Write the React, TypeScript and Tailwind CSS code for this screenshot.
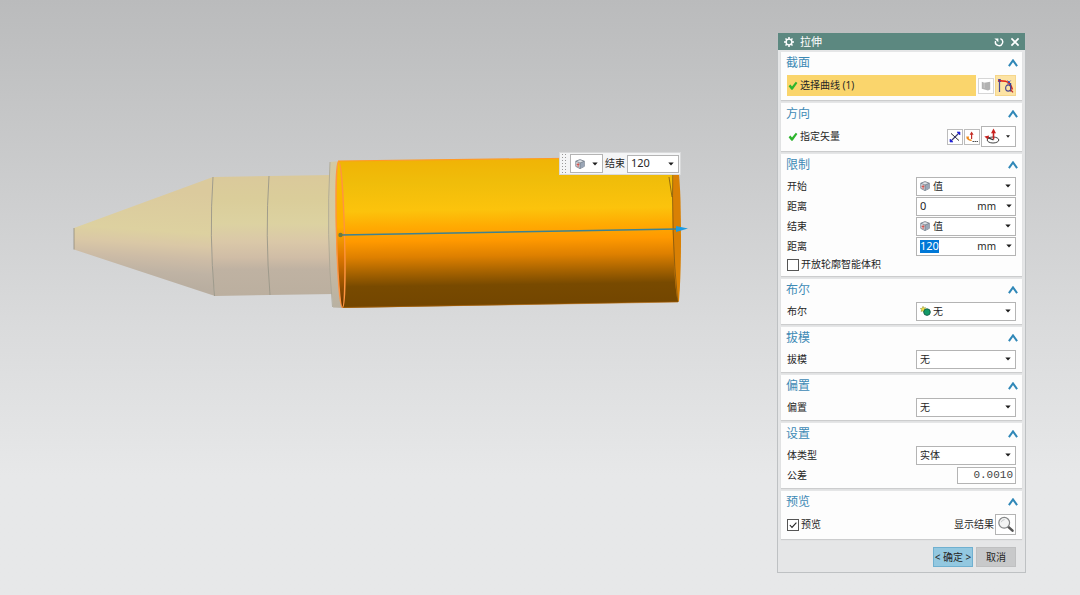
import { useState } from "react";
import type { ReactNode } from "react";

// ─── Small glyphs ────────────────────────────────────────────────────────────

function Caret({ className = "" }: { className?: string }) {
  return (
    <svg viewBox="0 0 6 4" className={`h-1 w-1.5 shrink-0 ${className}`}>
      <path d="M0.3 0.4h5.4L3 3.6z" fill="#1c1c1c" />
    </svg>
  );
}

function GreenCheck() {
  return (
    <svg viewBox="0 0 10 10" className="h-2.5 w-2.5 shrink-0">
      <path d="M0.6 5.2L2.4 3.6L4 5.4L7.8 0.8L9.4 2L4.6 8.8L3.4 8.8Z" fill="#2db52d" />
    </svg>
  );
}

function CubeIcon() {
  return (
    <svg viewBox="0 0 10 10" className="h-2.5 w-2.5 shrink-0">
      <path d="M5 0.6L9.3 2.2V7.4L5 9.6L0.8 7.4V2.2Z" fill="#dfe3e8" stroke="#7b838e" strokeWidth="0.9" />
      <path d="M5 4L9.3 2.2V7.4L5 9.6Z" fill="#9aa6b6" />
      <path d="M0.8 2.2L5 4V9.6M5 4L9.3 2.2" fill="none" stroke="#747d89" strokeWidth="0.8" />
      <path d="M1.6 5.6h2.8M3.1 4v4" stroke="#d0504a" strokeWidth="1" />
    </svg>
  );
}

function BooleanIcon() {
  return (
    <svg viewBox="0 0 11 10" className="h-2.5 w-[11px] shrink-0">
      <path d="M3 0.3L3.8 2L5.6 1.6L4.9 3.2L6.2 4.4L4.4 4.6L4 6.2L2.8 4.9L1 5.4L1.7 3.8L0.3 2.6L2.2 2.3Z" fill="#f0e04a" stroke="#8a8f2b" strokeWidth="0.5" />
      <circle cx="7" cy="6.1" r="3.3" fill="#139a68" stroke="#145c48" strokeWidth="0.9" />
    </svg>
  );
}

// ─── Form pieces ─────────────────────────────────────────────────────────────

function Section({ title, children }: { title: string; children: ReactNode }) {
  const [open, setOpen] = useState(true);
  return (
    <section className="bg-[#fdfdfd] pb-[3px] shadow-[0_1px_1px_#cccdce]">
      <button
        type="button"
        onClick={() => setOpen(!open)}
        aria-expanded={open}
        className="flex h-[22px] w-full items-center justify-between pl-[5px] pr-1 text-xs text-[#3d8ab5]"
      >
        {title}
        <svg viewBox="0 0 10 8" className={`h-2 w-2.5 ${open ? "" : "rotate-180"}`}>
          <path d="M0.9 7.2L5 1.4L9.1 7.2" fill="none" stroke="#3088b8" strokeWidth="2" />
        </svg>
      </button>
      {open && <div className="px-1.5">{children}</div>}
    </section>
  );
}

type SelectRowProps = { id: string; label: string; options: string[]; icon?: ReactNode };

function SelectRow({ id, label, options, icon }: SelectRowProps) {
  return (
    <div className="flex h-5 items-center justify-between">
      <label htmlFor={id}>{label}</label>
      <div className="relative flex w-[100px] items-center">
        <select
          id={id}
          className={`h-[19px] w-full appearance-none border border-[#b4b4b4] bg-white ${icon ? "pl-4" : "pl-[3px]"}`}
        >
          {options.map((o) => (
            <option key={o}>{o}</option>
          ))}
        </select>
        {icon && <span className="pointer-events-none absolute left-1">{icon}</span>}
        <Caret className="pointer-events-none absolute right-[5px]" />
      </div>
    </div>
  );
}

type DistanceRowProps = { id: string; label: string; value: string; active?: boolean };

function DistanceRow({ id, label, value, active }: DistanceRowProps) {
  return (
    <div className="flex h-5 items-center justify-between">
      <label htmlFor={id}>{label}</label>
      <div className="flex h-[19px] w-[100px] items-center justify-between border border-[#b4b4b4] bg-white pl-[3px] pr-[3px]">
        <input
          id={id}
          defaultValue={value}
          className={`h-[13px] w-[19px] text-[11px] outline-none ${active ? "bg-[#0078d7] text-white" : ""}`}
        />
        <span className="ml-auto mr-2.5 text-[10px]">mm</span>
        <button type="button" aria-label="单位" className="flex">
          <Caret />
        </button>
      </div>
    </div>
  );
}

// ─── Extrude dialog ──────────────────────────────────────────────────────────

function ExtrudeDialog() {
  return (
    <form
      onSubmit={(e) => e.preventDefault()}
      className="absolute right-[54px] top-[33px] w-[249px] border border-t-0 border-[#bec1c3] bg-[#e5e6e7] text-[10px] text-[#262626]"
    >
      <header className="flex h-[17px] items-center bg-[#5c8880] pl-1.5 pr-[5px] text-white">
        <svg viewBox="0 0 10 10" className="h-2.5 w-2.5">
          <path
            d="M5 0V10M0 5H10M1.5 1.5L8.5 8.5M8.5 1.5L1.5 8.5"
            stroke="currentColor"
            strokeWidth="1.5"
          />
          <circle cx="5" cy="5" r="2.9" fill="#5c8880" stroke="currentColor" strokeWidth="1.4" />
        </svg>
        <h1 className="ml-1.5 text-[11px] leading-none">拉伸</h1>
        <button type="button" aria-label="重置" className="ml-auto">
          <svg viewBox="0 0 10 10" className="h-2.5 w-2.5">
            <path d="M6.4 1.7A3.6 3.6 0 1 1 1.6 4" fill="none" stroke="currentColor" strokeWidth="1.4" />
            <path d="M0.4 1.6H4.4V5.2Z" fill="currentColor" />
          </svg>
        </button>
        <button type="button" aria-label="关闭" className="ml-1.5">
          <svg viewBox="0 0 10 10" className="h-2.5 w-2.5">
            <path d="M1.4 1.4L8.6 8.6M8.6 1.4L1.4 8.6" stroke="currentColor" strokeWidth="1.7" />
          </svg>
        </button>
      </header>

      <div className="flex flex-col gap-[3px] px-[3px] pt-0.5">
        <Section title="截面">
          <div className="flex h-[23px] items-center">
            <div className="flex h-[21px] flex-1 items-center gap-0.5 bg-[#fad56c] pl-px">
              <GreenCheck />
              <span>选择曲线 (1)</span>
            </div>
            <button type="button" aria-label="绘制截面" className="ml-0.5 flex h-4 w-4 items-center justify-center border border-[#d6d6d6] bg-white">
              <svg viewBox="0 0 10 10" className="h-2.5 w-2.5">
                <path d="M0.8 0.8L3.2 1.8L9.2 0.8V8.4L7 9.4L0.8 7.8Z" fill="#b2b2b2" />
                <path d="M3.2 1.8V7" stroke="#cacaca" />
              </svg>
            </button>
            <button type="button" aria-label="曲线" className="ml-px flex h-[21px] w-[21px] items-center justify-center border border-[#f5d68c] bg-[#fce3a4]">
              <svg viewBox="0 0 18 18" className="h-[18px] w-[18px]">
                <path d="M2.5 2V15" stroke="#4a4c98" strokeWidth="1.2" />
                <path d="M1 3.6L8.5 4.2Q13.4 5.2 15.4 12.5" fill="none" stroke="#e02a18" strokeWidth="1.6" />
                <path d="M13.6 6V14.5" stroke="#3a3d8c" strokeWidth="1.2" />
                <ellipse cx="11.2" cy="11" rx="2.6" ry="3.1" fill="none" stroke="#4a4891" strokeWidth="1.1" />
                <path d="M1.2 2.2L3.8 4.8M3.8 2.2L1.2 4.8M10.6 3.6L13.6 6.6M13.6 3.6L10.6 6.6" stroke="#2b41c0" strokeWidth="0.9" />
                <path d="M13.8 12.8L16 15.4" stroke="#c32c2a" strokeWidth="1.3" />
              </svg>
            </button>
          </div>
        </Section>

        <Section title="方向">
          <div className="flex h-[23px] items-center">
            <div className="flex flex-1 items-center gap-0.5 pl-px">
              <GreenCheck />
              <span>指定矢量</span>
            </div>
            <button type="button" aria-label="反向" className="flex h-4 w-4 items-center justify-center border border-[#bcbcbc] bg-white">
              <svg viewBox="0 0 12 12" className="h-3 w-3">
                <path d="M2 2.4L10 9.6" stroke="#333" strokeWidth="1" />
                <path d="M2 10L10 2" stroke="#3a3a70" strokeWidth="1.1" />
                <path d="M11 1V4L8 1ZM1 11V8L4 11Z" fill="#2222d8" stroke="#2222d8" strokeWidth="0.6" />
              </svg>
            </button>
            <button type="button" aria-label="矢量对话框" className="ml-px flex h-4 w-4 items-center justify-center border border-[#bcbcbc] bg-white">
              <svg viewBox="0 0 12 12" className="h-3 w-3">
                <path d="M5.6 8V2" stroke="#c42d25" strokeWidth="1.2" />
                <path d="M5.6 0.5L7.6 3.8H3.6Z" fill="#c42d25" />
                <path d="M1 5.5Q1.5 9.5 5.6 9.2" fill="none" stroke="#ef8a1c" strokeWidth="1.5" />
                <path d="M0.3 7.3L2.5 5L3.2 8Z" fill="#ef8a1c" />
                <path d="M6.6 10.5h1.2M8.6 10.5h1.2M10.6 10.5h1.2" stroke="#222" strokeWidth="1.2" />
              </svg>
            </button>
            <button type="button" aria-label="矢量类型" className="ml-px flex h-[21px] w-[35px] items-center justify-between border border-[#b4b4b4] bg-white pl-0.5 pr-[5px]">
              <svg viewBox="0 0 17 17" className="h-[17px] w-[17px]">
                <ellipse cx="9" cy="12" rx="5.8" ry="3" fill="none" stroke="#444" strokeWidth="1" />
                <path d="M9.5 11.5V4" stroke="#c9211e" strokeWidth="1.6" />
                <path d="M9.5 0.5L12 5.2H7Z" fill="#c9211e" />
                <path d="M9.5 12L4 9.6" stroke="#333" strokeWidth="1.2" />
                <path d="M0.4 8.6L5.2 7.6L3.8 11.6Z" fill="#c9211e" />
              </svg>
              <svg viewBox="0 0 4 3" className="h-[3px] w-1">
                <path d="M0 0.2h4L2 2.8z" fill="#222" />
              </svg>
            </button>
          </div>
        </Section>

        <Section title="限制">
          <SelectRow id="start" label="开始" options={["值", "对称值", "贯通"]} icon={<CubeIcon />} />
          <DistanceRow id="start-distance" label="距离" value="0" />
          <SelectRow id="end" label="结束" options={["值", "对称值", "贯通"]} icon={<CubeIcon />} />
          <DistanceRow id="end-distance" label="距离" value="120" active />
          <label className="flex h-[17px] items-center gap-0.5">
            <input type="checkbox" className="h-3 w-3 appearance-none border border-[#555] bg-white" />
            开放轮廓智能体积
          </label>
        </Section>

        <Section title="布尔">
          <SelectRow id="boolean" label="布尔" options={["无", "求和", "求差"]} icon={<BooleanIcon />} />
        </Section>

        <Section title="拔模">
          <SelectRow id="draft" label="拔模" options={["无", "从起始限制"]} />
        </Section>

        <Section title="偏置">
          <SelectRow id="offset" label="偏置" options={["无", "单侧", "两侧"]} />
        </Section>

        <Section title="设置">
          <SelectRow id="body-type" label="体类型" options={["实体", "片体"]} />
          <div className="flex h-5 items-center justify-between">
            <label htmlFor="tolerance">公差</label>
            <input
              id="tolerance"
              defaultValue="0.0010"
              className="h-[17px] w-[59px] border border-[#b4b4b4] bg-white pr-0.5 text-right font-['Liberation_Mono',monospace] text-[11px] text-[#444]"
            />
          </div>
        </Section>

        <Section title="预览">
          <div className="flex h-[23px] items-center justify-between">
            <label className="flex items-center gap-0.5">
              <span className="relative flex">
                <input type="checkbox" defaultChecked className="peer h-3 w-3 appearance-none border border-[#555] bg-white" />
                <svg viewBox="0 0 12 12" className="pointer-events-none absolute inset-0 hidden h-3 w-3 peer-checked:block">
                  <path d="M2.8 6L5 8.4L9.4 3.6" fill="none" stroke="#222" strokeWidth="1.1" />
                </svg>
              </span>
              预览
            </label>
            <button type="button" className="flex items-center gap-px">
              显示结果
              <span className="flex h-[21px] w-[21px] items-center justify-center border border-[#b4b4b4] bg-white">
                <svg viewBox="0 0 18 18" className="h-[18px] w-[18px]">
                  <path d="M11 10.6L15.5 14.6" stroke="#555" strokeWidth="2.6" strokeLinecap="round" />
                  <circle cx="7.2" cy="6.8" r="5.4" fill="#f3f4f4" stroke="#858788" strokeWidth="1.2" />
                  <path d="M4.2 6.2Q5 3.7 7.6 3.6" fill="none" stroke="#c3c6c8" strokeWidth="1" />
                </svg>
              </span>
            </button>
          </div>
        </Section>
      </div>

      <footer className="flex justify-end gap-[3px] pb-[5px] pr-[9px] pt-2">
        <button type="submit" className="h-5 w-10 whitespace-nowrap border border-[#6fb0d0] bg-[#93c8e0]">
          &lt; 确定 &gt;
        </button>
        <button type="button" className="h-5 w-10 border border-[#bfc0c1] bg-[#c8c9ca]">
          取消
        </button>
      </footer>
    </form>
  );
}

// ─── Model ───────────────────────────────────────────────────────────────────

const TAN_STOPS: [number, string][] = [
  [0, "#dac99b"],
  [0.2, "#dacd9a"],
  [0.4, "#dcd2a1"],
  [0.55, "#dac8a8"],
  [0.68, "#d0bda6"],
  [0.78, "#bfb2a2"],
  [1, "#bbaf9f"],
];

function Model() {
  return (
    <svg viewBox="60 140 640 180" className="absolute left-[60px] top-[140px] h-[180px] w-[640px]">
      <defs>
        <linearGradient id="tan" x1="0" y1="0" x2="0" y2="1">
          {TAN_STOPS.map(([offset, color]) => (
            <stop key={offset} offset={offset} stopColor={color} />
          ))}
        </linearGradient>
        {/* shading runs along the cone, a little tilted */}
        <linearGradient id="cone" gradientUnits="userSpaceOnUse" x1="150" y1="190" x2="144" y2="285">
          <stop offset="0" stopColor="#dbca9d" />
          <stop offset="0.42" stopColor="#ddd1a0" />
          <stop offset="0.56" stopColor="#dac8a6" />
          <stop offset="0.7" stopColor="#cdbca6" />
          <stop offset="0.85" stopColor="#bfb3a4" />
          <stop offset="1" stopColor="#b9aea0" />
        </linearGradient>
        <linearGradient id="collar" x1="0" y1="0" x2="0" y2="1">
          <stop offset="0" stopColor="#d3c9a2" />
          <stop offset="0.45" stopColor="#d5cba6" />
          <stop offset="0.7" stopColor="#c6baa3" />
          <stop offset="1" stopColor="#b9b1a1" />
        </linearGradient>
        <linearGradient id="orange" gradientUnits="userSpaceOnUse" x1="500" y1="160" x2="502" y2="305">
          <stop offset="0" stopColor="#f0b406" />
          <stop offset="0.15" stopColor="#f0bd0a" />
          <stop offset="0.34" stopColor="#fcc30c" />
          <stop offset="0.45" stopColor="#ffab02" />
          <stop offset="0.55" stopColor="#ff9900" />
          <stop offset="0.66" stopColor="#de8000" />
          <stop offset="0.77" stopColor="#a56200" />
          <stop offset="0.86" stopColor="#784a00" />
          <stop offset="1" stopColor="#734600" />
        </linearGradient>
        <linearGradient id="inner" x1="0" y1="0" x2="0" y2="1">
          <stop offset="0" stopColor="#f3c000" />
          <stop offset="0.45" stopColor="#ffae00" />
          <stop offset="0.65" stopColor="#e07800" />
          <stop offset="1" stopColor="#5e3300" />
        </linearGradient>
      </defs>

      {/* cone and barrel */}
      <path d="M74 228L213 177Q208 235 215 296L74 249.5Z" fill="url(#cone)" />
      <path d="M213 177L332 175L334 294L215 296Q208 235 213 177Z" fill="url(#tan)" />
      <path d="M74 228V249.5" stroke="#8f8b7c" strokeWidth="0.8" />
      <path d="M213 177Q209 235 214.5 296M269 176Q265 235 270 295" fill="none" stroke="#9a9688" strokeWidth="0.9" />

      {/* collar */}
      <path d="M330 162L340 161L344 308L333 307.5Q326 235 330 162Z" fill="url(#collar)" />
      <path d="M330 162Q326 235 332.5 307" fill="none" stroke="#a9a493" strokeWidth="0.8" />

      {/* extruded body */}
      <path d="M338 161L675 157Q683 230 678.5 302L342 308Q332 235 338 161Z" fill="url(#orange)" />
      <path d="M338 161L675 157" stroke="#ff9a24" strokeWidth="1.2" />
      <path d="M342 307.5L678 302" stroke="#b8690c" strokeWidth="0.6" />
      <path d="M674 157Q679 157 680.5 200Q682 262 679 301Q677 304 675 280Q671 220 674 157Z" fill="#d98004" />
      <path d="M669 177L672 197M673 158Q671 235 677.5 300" fill="none" stroke="#7c5410" strokeWidth="0.8" />
      <ellipse cx="340.5" cy="234.5" rx="4" ry="73" transform="rotate(-1.5 340.5 234.5)" fill="url(#inner)" stroke="#ff9440" strokeWidth="1.3" />

      {/* extrude vector */}
      <path d="M341 235L677 229" stroke="#3d8291" strokeWidth="1.4" />
      <circle cx="340.5" cy="235" r="2.2" fill="#6f7a3c" />
      <path d="M676 226L688 228.6L676 232Z" fill="#1d9be0" />
    </svg>
  );
}

function LimitToolbar() {
  return (
    <div className="absolute left-[559px] top-[152px] flex h-[23px] items-center border border-[#d9dadb] bg-[#f4f5f6] px-px text-[10px] text-[#262626]">
      <svg viewBox="0 0 6 19" className="mr-[3px] h-[19px] w-1.5">
        <path d="M1.5 0V19M4.5 0V19" stroke="#999" strokeWidth="1" strokeDasharray="1 2" />
      </svg>
      <button type="button" aria-label="限制类型" className="flex h-[19px] w-[33px] items-center justify-between border border-[#b4b4b4] bg-white px-1">
        <CubeIcon />
        <Caret />
      </button>
      <label htmlFor="canvas-distance" className="mx-0.5 whitespace-nowrap">结束</label>
      <div className="flex h-[18px] w-[52px] items-center border border-[#b4b4b4] bg-white pl-[3px] pr-1">
        <input id="canvas-distance" defaultValue="120" className="w-0 flex-1 text-[11px] outline-none" />
        <Caret />
      </div>
    </div>
  );
}

export default function App() {
  return (
    <main className="relative min-h-screen overflow-hidden bg-linear-to-b from-[#babbbc] via-[#dadbdc] via-55% to-[#e7e8e9] to-80% font-['Noto_Sans','Noto_Sans_CJK_SC',sans-serif]">
      <Model />
      <LimitToolbar />
      <ExtrudeDialog />
    </main>
  );
}
